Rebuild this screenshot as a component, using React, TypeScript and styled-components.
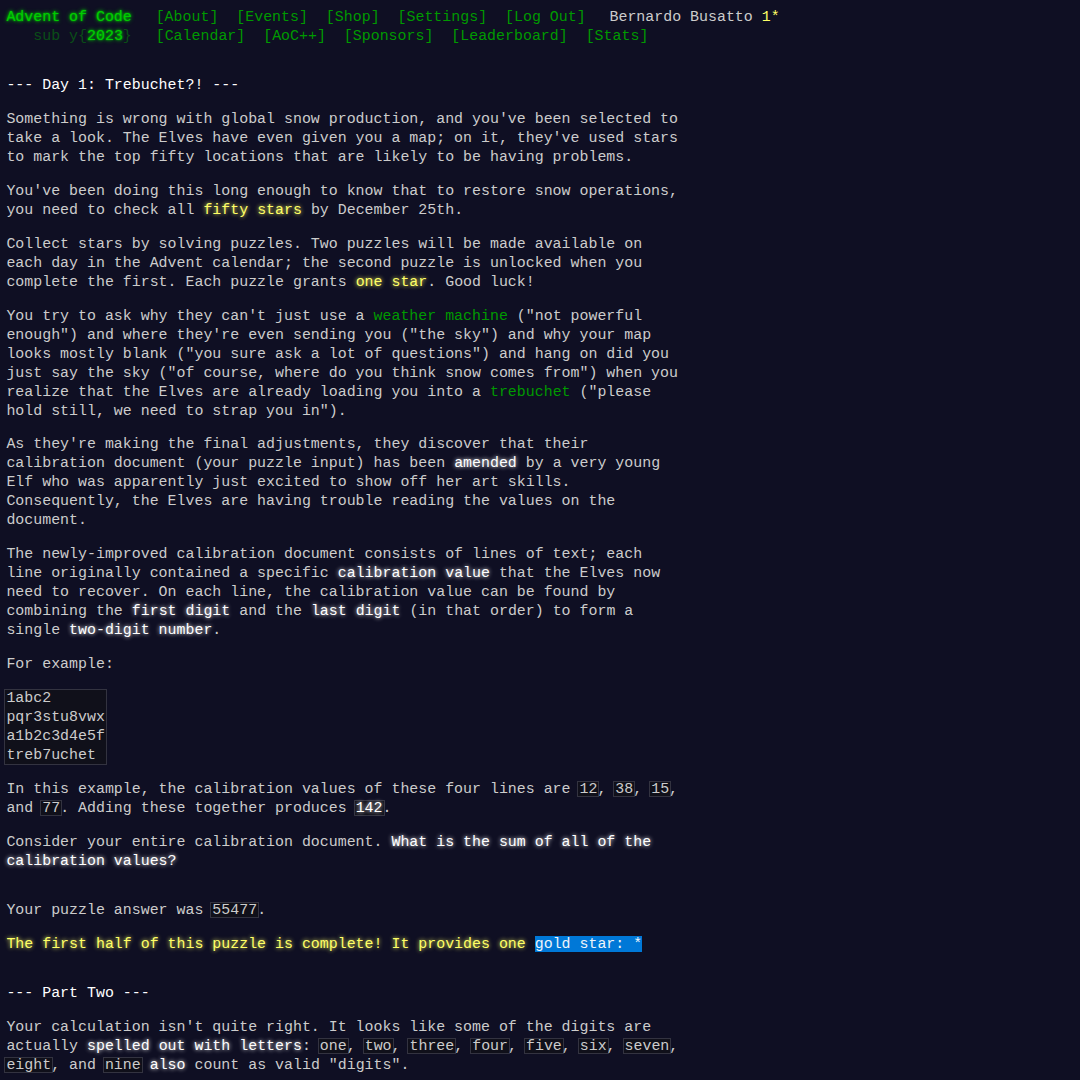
import { createGlobalStyle } from 'styled-components'
import styled from 'styled-components'

const GlobalStyle = createGlobalStyle`
  html, body {
    background: #0f0f23;
  }
  body {
    margin: 0;
    padding: 8px 6.4px;
    color: #cccccc;
    font-family: "Liberation Mono", "DejaVu Sans Mono", monospace;
    font-size: 14.93px;
    line-height: 19px;
  }
`

const Header = styled.header`
  white-space: nowrap;
  margin-bottom: 2em;
`

const HeaderRow = styled.div`
  display: flex;
  align-items: baseline;
`

const Title = styled.h1`
  margin: 0;
  padding-right: 1em;
  font-size: 1em;
  font-weight: normal;
  white-space: pre;
  color: #00cc00;
`

const Glow = styled.span`
  color: #00cc00;
  text-shadow: 0 0 2px #00cc00, 0 0 4px #00cc00;
`

const Faded = styled.span`
  opacity: 0.33;
`

const Nav = styled.ul`
  list-style: none;
  display: flex;
  margin: 0;
  padding: 0;
`

const NavItem = styled.li`
  padding: 0 0.6em;
`

const Link = styled.a`
  color: #009900;
  text-decoration: none;
  white-space: nowrap;
`

const User = styled.div`
  padding-left: 1em;
  color: #cccccc;
`

const StarCount = styled.span`
  color: #ffff66;
`

const Article = styled.article`
  width: 45.05em;
  margin: 2em 0;
`

const Heading = styled.h2`
  margin: 1em 0;
  font-size: 1em;
  font-weight: normal;
  color: #ffffff;
  white-space: nowrap;
`

const P = styled.p`
  margin: 1em 0;
`

const Em = styled.em<{ $star?: boolean }>`
  font-style: normal;
  color: ${p => (p.$star ? '#ffff66' : '#ffffff')};
  text-shadow: 0 0 4px ${p => (p.$star ? '#ffff66' : '#ffffff')};
`

const Code = styled.code`
  font-family: inherit;
  background: #10101a;
  box-shadow: inset 0 0 0 1px #333340;
  padding: 0 2px;
  margin: 0 -2px;
`

const Pre = styled.pre`
  margin: 1em 0;
  font-family: inherit;
  line-height: 19px;
`

const PreCode = styled.code`
  display: inline-block;
  font-family: inherit;
  background: #10101a;
  box-shadow: inset 0 0 0 1px #333340;
  padding: 0 2px;
  margin: 0 -2px;
`

const Success = styled.p`
  margin: 1em 0;
  color: #ffff66;
  text-shadow: 0 0 4px #ffff66;
`

const Selected = styled.span`
  background: #0078d7;
  color: #eef4fa;
  text-shadow: none;
`

const topNav = ['About', 'Events', 'Shop', 'Settings', 'Log Out']
const bottomNav = ['Calendar', 'AoC++', 'Sponsors', 'Leaderboard', 'Stats']
const spelled = ['one', 'two', 'three', 'four', 'five', 'six', 'seven']

export default function App() {
  return (
    <>
      <GlobalStyle />
      <Header>
        <HeaderRow>
          <Title>
            <Glow>Advent of Code</Glow>
          </Title>
          <Nav>
            {topNav.map(n => (
              <NavItem key={n}>
                <Link href="#">[{n}]</Link>
              </NavItem>
            ))}
          </Nav>
          <User>
            Bernardo Busatto <StarCount>1*</StarCount>
          </User>
        </HeaderRow>
        <HeaderRow>
          <Title>
            {'   '}
            <Faded>sub y{'{'}</Faded>
            <Glow>2023</Glow>
            <Faded>{'}'}</Faded>
          </Title>
          <Nav>
            {bottomNav.map(n => (
              <NavItem key={n}>
                <Link href="#">[{n}]</Link>
              </NavItem>
            ))}
          </Nav>
        </HeaderRow>
      </Header>

      <main>
        <Article>
          <Heading>--- Day 1: Trebuchet?! ---</Heading>
          <P>
            Something is wrong with global snow production, and you've been selected to take a look. The Elves have
            even given you a map; on it, they've used stars to mark the top fifty locations that are likely to be
            having problems.
          </P>
          <P>
            You've been doing this long enough to know that to restore snow operations, you need to check all{' '}
            <Em $star>fifty stars</Em> by December 25th.
          </P>
          <P>
            Collect stars by solving puzzles. Two puzzles will be made available on each day in the Advent calendar;
            the second puzzle is unlocked when you complete the first. Each puzzle grants <Em $star>one star</Em>. Good
            luck!
          </P>
          <P>
            You try to ask why they can't just use a <Link href="#">weather machine</Link> ("not powerful enough") and
            where they're even sending you ("the sky") and why your map looks mostly blank ("you sure ask a lot of
            questions") and hang on did you just say the sky ("of course, where do you think snow comes from") when you
            realize that the Elves are already loading you into a <Link href="#">trebuchet</Link> ("please hold still,
            we need to strap you in").
          </P>
          <P>
            As they're making the final adjustments, they discover that their calibration document (your puzzle input)
            has been <Em>amended</Em> by a very young Elf who was apparently just excited to show off her art skills.
            Consequently, the Elves are having trouble reading the values on the document.
          </P>
          <P>
            The newly-improved calibration document consists of lines of text; each line originally contained a
            specific <Em>calibration value</Em> that the Elves now need to recover. On each line, the calibration value
            can be found by combining the <Em>first digit</Em> and the <Em>last digit</Em> (in that order) to form a
            single <Em>two-digit number</Em>.
          </P>
          <P>For example:</P>
          <Pre>
            <PreCode>{'1abc2\npqr3stu8vwx\na1b2c3d4e5f\ntreb7uchet'}</PreCode>
          </Pre>
          <P>
            In this example, the calibration values of these four lines are <Code>12</Code>, <Code>38</Code>,{' '}
            <Code>15</Code>, and <Code>77</Code>. Adding these together produces{' '}
            <Code>
              <Em>142</Em>
            </Code>
            .
          </P>
          <P>
            Consider your entire calibration document. <Em>What is the sum of all of the calibration values?</Em>
          </P>
        </Article>
        <P>
          Your puzzle answer was <Code>55477</Code>.
        </P>
        <Success>
          The first half of this puzzle is complete! It provides one <Selected>gold star: *</Selected>
        </Success>
        <Article>
          <Heading>--- Part Two ---</Heading>
          <P>
            Your calculation isn't quite right. It looks like some of the digits are actually{' '}
            <Em>spelled out with letters</Em>:{' '}
            {spelled.map(w => (
              <span key={w}>
                <Code>{w}</Code>,{' '}
              </span>
            ))}
            <Code>eight</Code>, and <Code>nine</Code> <Em>also</Em> count as valid "digits".
          </P>
        </Article>
      </main>
    </>
  )
}
